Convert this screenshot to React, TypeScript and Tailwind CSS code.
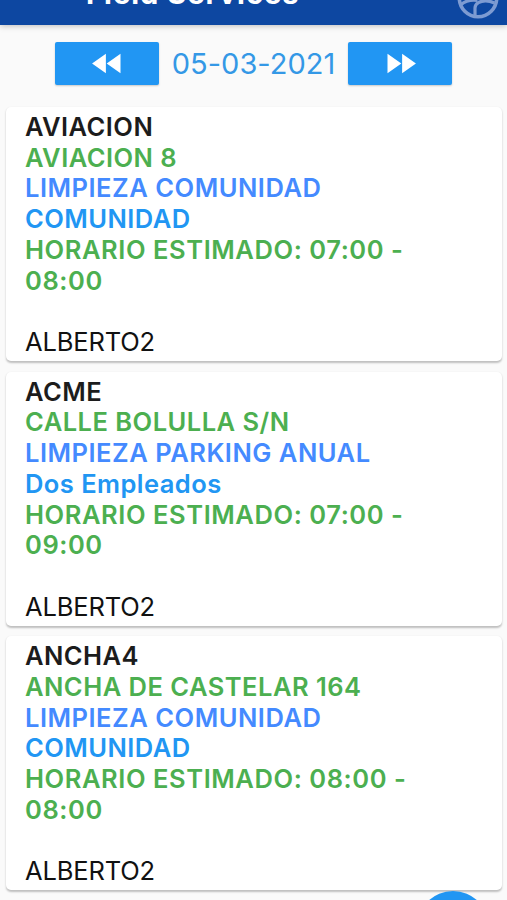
import { MdFastForward, MdFastRewind } from "react-icons/md";

interface Service {
    client: string;
    address: string;
    task: string;
    detail: string;
    schedule: string;
    employee: string;
}

const services: Service[] = [
    {
        client: "AVIACION",
        address: "AVIACION 8",
        task: "LIMPIEZA COMUNIDAD",
        detail: "COMUNIDAD",
        schedule: "07:00 - 08:00",
        employee: "ALBERTO2",
    },
    {
        client: "ACME",
        address: "CALLE BOLULLA S/N",
        task: "LIMPIEZA PARKING ANUAL",
        detail: "Dos Empleados",
        schedule: "07:00 - 09:00",
        employee: "ALBERTO2",
    },
    {
        client: "ANCHA4",
        address: "ANCHA DE CASTELAR 164",
        task: "LIMPIEZA COMUNIDAD",
        detail: "COMUNIDAD",
        schedule: "08:00 - 08:00",
        employee: "ALBERTO2",
    },
];

function UsersIcon() {
    return (
        <svg viewBox="0 0 42 42" className="mb-[6px] size-[42px] shrink-0 text-[#7d9bd2]" fill="none" stroke="currentColor" strokeWidth="3.6">
            <circle cx="21" cy="21" r="18.7" />
            <circle cx="16" cy="13" r="4.5" />
            <circle cx="28" cy="16" r="3.2" />
            <path d="M18 38.5V31C18 26.5 23.5 23.8 28.5 23.8C31.5 23.8 34.5 24.6 37.5 26" strokeWidth="3.2" />
            <path d="M4 27.5C8 24.2 13.5 22.5 20.5 23.4" strokeWidth="3.2" />
        </svg>
    );
}

function ServiceCard({ service }: { service: Service }) {
    return (
        <div className="h-[254px] rounded-[5px] bg-white pl-[19px] pr-16 pt-[5px] text-[25.5px] leading-[30.7px] font-semibold tracking-[0.45px] shadow-[0_1.5px_2px_rgba(0,0,0,0.24)]">
            <p className="text-[#1c1c1c]">{service.client}</p>
            <p className="tracking-[0.48px] text-[#4caf50]">{service.address}</p>
            <p className="tracking-[0.52px] text-[#448aff]">{service.task}</p>
            <p className="text-[#2196f3]">{service.detail}</p>
            <p className="tracking-[0.57px] text-[#4caf50]">{`HORARIO ESTIMADO: ${service.schedule}`}</p>
            <p className="mt-[30.7px] font-normal tracking-[-0.15px] text-[#111]">{service.employee}</p>
        </div>
    );
}

export default function App() {
    return (
        <div className="relative flex h-[900px] w-[507px] flex-col overflow-hidden bg-[#fafafa] font-['Inter','Liberation_Sans',sans-serif]">
            <header className="flex h-[24.5px] shrink-0 items-end justify-between bg-[#0d47a1] pl-[86px] pr-[8px] shadow-[0_1px_6px_rgba(0,0,0,0.25)]">
                <h1 className="mb-[12.5px] text-[29px] leading-[36px] font-bold tracking-[1px] text-white">Field Services</h1>
                <UsersIcon />
            </header>

            <div className="flex h-[82.5px] shrink-0 items-center justify-between pl-[55px] pr-[55px] pb-[5px]">
                <button className="flex h-[43px] w-[104px] items-center justify-center rounded-[2px] bg-[#2196f3] text-white shadow-[0_1px_2px_rgba(0,0,0,0.2)]">
                    <MdFastRewind className="size-[39px]" />
                </button>
                <span className="text-[29px] tracking-[0.02px] text-[#3498e6]">05-03-2021</span>
                <button className="flex h-[43px] w-[104px] items-center justify-center rounded-[2px] bg-[#2196f3] text-white shadow-[0_1px_2px_rgba(0,0,0,0.2)]">
                    <MdFastForward className="size-[39px]" />
                </button>
            </div>

            <main className="flex flex-col gap-[10.7px] pl-[6px] pr-[5px]">
                {services.map((service) => (
                    <ServiceCard key={service.client} service={service} />
                ))}
            </main>

            {/* floating action button, mostly below the fold */}
            <button className="absolute left-[417px] top-[891px] size-[72px] rounded-full bg-[#2196f3]" />
        </div>
    );
}
